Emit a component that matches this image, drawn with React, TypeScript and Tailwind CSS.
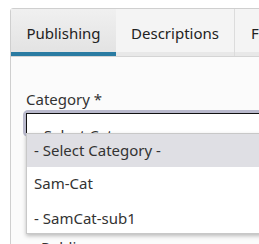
export default function App() {
  return (
    <div className="w-[259px] h-[244px] overflow-hidden bg-white pl-[10px] pt-[8px] font-['Noto_Sans',sans-serif] text-[#222]">
      <div className="w-[400px] h-[300px] border border-[#cfcfcf] rounded-tl-[3px] bg-[#fbfbfb]">
        <div className="flex h-[48px] border-b border-[#d4d4d4] bg-[#e9e9e9]">
          <div className="w-[105px] flex flex-col">
            <div className="flex-1 flex items-center justify-center pt-[6px] bg-gradient-to-b from-[#f0f0f0] to-[#e3e3e3] text-[15px]">
              Publishing
            </div>
            <div className="h-[4px] bg-[#2a7ba2]" />
          </div>
          <div className="w-[119px] flex flex-col border-r border-[#dcdcdc]">
            <div className="flex-1 flex items-center justify-center pt-[6px] bg-[#f4f4f4] text-[15px]">
              Descriptions
            </div>
            <div className="h-[4px] bg-[#e8e8e8]" />
          </div>
          <div className="flex-1 flex flex-col">
            <div className="flex-1 flex items-center pl-[16px] pt-[6px] bg-[#f4f4f4] text-[15px]">
              Files
            </div>
            <div className="h-[4px] bg-[#e8e8e8]" />
          </div>
        </div>
        <div className="relative pl-[15px] pt-[32px]">
          <div className="text-[15px] leading-[20px] text-[#333]">Category *</div>
          <div className="mt-[1px] -ml-[3px] w-[300px] rounded-[5px] border-[3px] border-[#b9b9cc]">
            <div className="h-[21px] border border-[#111] border-b-0 bg-white pl-[8px] pt-[12px] overflow-hidden text-[15px] leading-[18px] text-[#333]">
              - Select Category -
            </div>
          </div>
          <div className="absolute left-[15px] top-[76px] w-[300px] h-[101px] bg-white border border-[#c8c8c8] shadow-[0_2px_4px_rgba(0,0,0,0.25)] text-[15px] text-[#333]">
            <div className="h-[33px] flex items-center pl-[7px] bg-[#dfdfe4]">- Select Category -</div>
            <div className="h-[33px] flex items-center pl-[7px]">Sam-Cat</div>
            <div className="h-[33px] flex items-center pt-[3px] pl-[7px]">- SamCat-sub1</div>
          </div>
          <div className="mt-[100px] pl-[15px] text-[15px] leading-[20px] text-[#333]">Public</div>
        </div>
      </div>
    </div>
  );
}
